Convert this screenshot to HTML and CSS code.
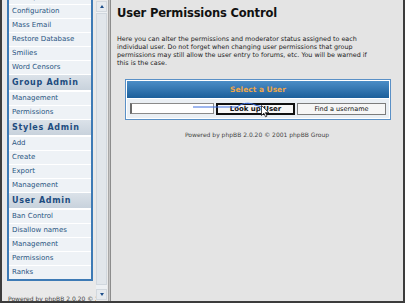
FILE: index.html
```html
<!DOCTYPE html>
<html lang="en">
<head>
    <meta charset="UTF-8">
    <title>User Permissions Control</title>
    <link rel="stylesheet" href="styles.css">
</head>
<body>
    <div class="window">
        <!-- Left navigation frame -->
        <div class="nav-frame">
            <div class="nav-view">
                <div class="nav-panel">
                    <div class="nav-item">Backup Database</div>
                    <div class="nav-item">Configuration</div>
                    <div class="nav-item">Mass Email</div>
                    <div class="nav-item">Restore Database</div>
                    <div class="nav-item">Smilies</div>
                    <div class="nav-item">Word Censors</div>
                    <div class="nav-header">Group Admin</div>
                    <div class="nav-item">Management</div>
                    <div class="nav-item">Permissions</div>
                    <div class="nav-header">Styles Admin</div>
                    <div class="nav-item">Add</div>
                    <div class="nav-item">Create</div>
                    <div class="nav-item">Export</div>
                    <div class="nav-item">Management</div>
                    <div class="nav-header">User Admin</div>
                    <div class="nav-item">Ban Control</div>
                    <div class="nav-item">Disallow names</div>
                    <div class="nav-item">Management</div>
                    <div class="nav-item">Permissions</div>
                    <div class="nav-item last">Ranks</div>
                </div>
                <div class="nav-footer">Powered by phpBB 2.0.20 &copy; 2001 phpBB Group</div>
            </div>
            <div class="scrollbar">
                <div class="sb-btn"><span class="arrow-up"></span></div>
                <div class="sb-track"><div class="sb-thumb"></div></div>
                <div class="sb-btn"><span class="arrow-down"></span></div>
            </div>
        </div>

        <div class="frame-divider"></div>

        <!-- Main frame -->
        <div class="main-frame">
            <h1 class="page-title">User Permissions Control</h1>
            <p class="page-desc">Here you can alter the permissions and moderator status assigned to each<br>individual user. Do not forget when changing user permissions that group<br>permissions may still allow the user entry to forums, etc. You will be warned if<br>this is the case.</p>

            <div class="forumline">
                <div class="forumline-head">Select a User</div>
                <div class="forumline-row">
                    <div class="text-input"></div>
                    <div class="btn btn-main">Look up User</div>
                    <div class="btn">Find a username</div>
                </div>
            </div>

            <div class="copyright">Powered by phpBB 2.0.20 &copy; 2001 phpBB Group</div>

            <svg class="pointer-overlay" width="292" height="301" viewBox="0 0 292 301">
                <path d="M82 107 H126 C131 103 138 102 144 105 L151 107" fill="none" stroke="#3c6fe0" stroke-width="1"/>
                <path d="M150.5 105.5 v10 l2.4 -2.3 l1.6 3.6 l1.5 -0.7 l-1.6 -3.5 h3.4 z" fill="#fff" stroke="#000" stroke-width="0.7" stroke-linejoin="round"/>
            </svg>
        </div>
    </div>
</body>
</html>
```

FILE: styles.css
```css
* {
    box-sizing: border-box;
    margin: 0;
    padding: 0;
    font-family: 'DejaVu Sans', Verdana, sans-serif;
}

body {
    background-color: #ffffff;
}

.window {
    display: flex;
    width: 405px;
    height: 303px;
    border: 2px solid #3c3c3c;
    border-top: none;
    overflow: hidden;
}

/* navigation frame */

.nav-frame {
    display: flex;
    width: 106px;
    flex: 0 0 106px;
    background-color: #e9e9e9;
}

.nav-view {
    width: 94px;
    padding-left: 5px;
    overflow: hidden;
}

.nav-panel {
    width: 86px;
    margin-top: -9px;
    border: 2px solid #3d7ab5;
    border-top: none;
    background-color: #ffffff;
}

.nav-item {
    height: 14px;
    line-height: 13px;
    padding-left: 3px;
    font-size: 7px;
    color: #2a5582;
    background-color: #eef2f6;
    border-bottom: 1px solid #ffffff;
    white-space: nowrap;
}

.nav-item.last {
    border-bottom: none;
    height: 13px;
}

.nav-header {
    height: 17px;
    line-height: 15px;
    padding-left: 3px;
    font-size: 8px;
    font-weight: 700;
    letter-spacing: 0.7px;
    color: #1d4c7f;
    background: linear-gradient(#dbe2e9, #c8d2dc);
    border-bottom: 2px solid #ffffff;
    white-space: nowrap;
}

.nav-footer {
    margin-top: 14px;
    padding-left: 1px;
    font-size: 6px;
    color: #444444;
    white-space: nowrap;
}

.scrollbar {
    display: flex;
    flex-direction: column;
    width: 11px;
    margin: 1px 1px 1px 0;
    background-color: #edf0f3;
}

.sb-btn {
    height: 11px;
    display: flex;
    justify-content: center;
    align-items: center;
    background-color: #e6eaee;
    border: 1px solid #d2d8de;
}

.arrow-up {
    border-left: 2px solid transparent;
    border-right: 2px solid transparent;
    border-bottom: 3px solid #1f4f8a;
}

.arrow-down {
    border-left: 2px solid transparent;
    border-right: 2px solid transparent;
    border-top: 3px solid #1f4f8a;
}

.sb-track {
    flex: 1;
    padding: 1px 0 4px;
}

.sb-thumb {
    height: 100%;
    background-color: #e1e6eb;
    border: 1px solid #d0d7de;
}

.frame-divider {
    width: 2px;
    flex: 0 0 2px;
    background-color: #c6c6c6;
    border-left: 1px solid #a8a8a8;
}

/* main frame */

.main-frame {
    position: relative;
    flex: 1;
    background-color: #e4e4e4;
    border-left: 1px solid #8c8c8c;
    padding: 7px 0 0 6px;
}

.page-title {
    font-size: 11.5px;
    line-height: 13px;
    font-weight: 700;
    letter-spacing: -0.15px;
    color: #111111;
}

.page-desc {
    margin-top: 15px;
    font-size: 6.4px;
    line-height: 8px;
    color: #1a1a1a;
    white-space: nowrap;
}

.forumline {
    width: 266px;
    margin: 12px 0 0 8px;
    border: 1px solid #5a90c6;
    padding: 1px;
    background-color: #ffffff;
}

.forumline-head {
    height: 17px;
    line-height: 17px;
    text-align: center;
    font-size: 7.5px;
    font-weight: 700;
    color: #eda64a;
    background: linear-gradient(#4b8dc6, #1c5f9b);
}

.forumline-row {
    display: flex;
    align-items: center;
    gap: 2px;
    height: 19px;
    margin-top: 1px;
    padding-left: 3px;
    background-color: #eaeff4;
}

.text-input {
    width: 84px;
    height: 11px;
    background-color: #ffffff;
    border: 1px solid #8a8a8a;
    border-left: 2px solid #6a6a6a;
}

.btn {
    height: 12px;
    line-height: 10px;
    text-align: center;
    font-size: 6.5px;
    color: #111111;
    background-color: #f6f6f6;
    border: 1px solid #7c7c7c;
    white-space: nowrap;
}

.btn-main {
    width: 79px;
    font-size: 7px;
    font-weight: 700;
    line-height: 8px;
    border: 2px solid #111111;
}

.btn:last-child {
    width: 89px;
}

.copyright {
    margin-top: 11px;
    text-align: center;
    font-size: 6px;
    color: #444444;
    padding-right: 6px;
}

.pointer-overlay {
    position: absolute;
    left: 0;
    top: 0;
    pointer-events: none;
}
```
